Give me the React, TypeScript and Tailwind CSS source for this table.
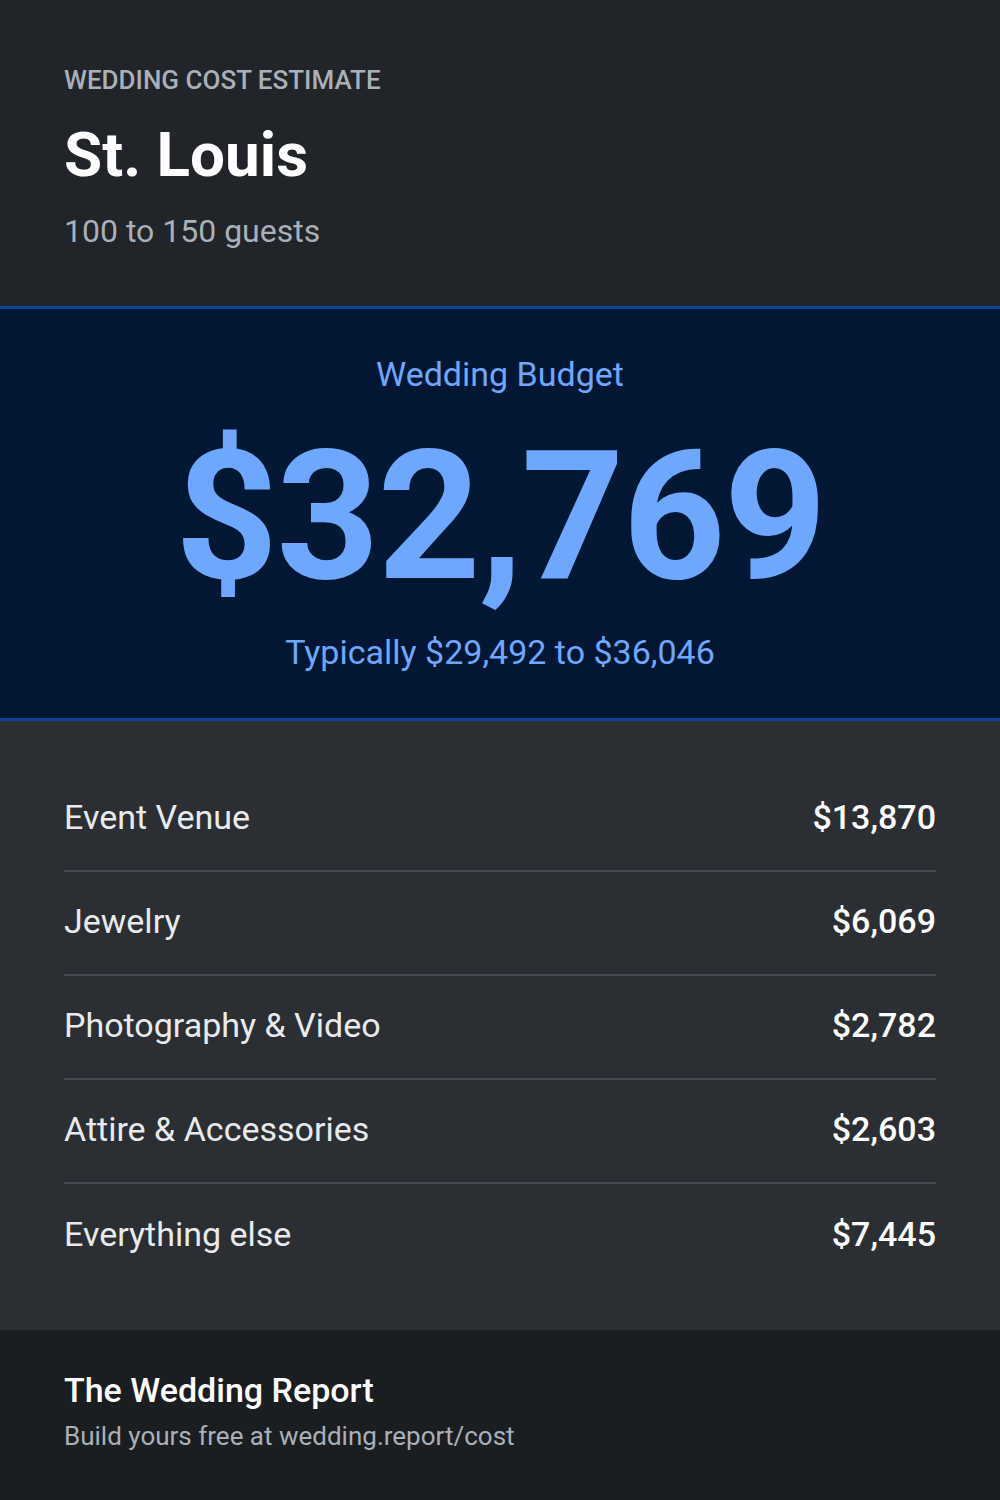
import React from 'react';

const items = [
  { label: 'Event Venue', value: '$13,870' },
  { label: 'Jewelry', value: '$6,069' },
  { label: 'Photography & Video', value: '$2,782' },
  { label: 'Attire & Accessories', value: '$2,603' },
  { label: 'Everything else', value: '$7,445' },
];

const App: React.FC = () => {
  return (
    <div className="w-[1000px] h-[1500px] flex flex-col bg-[#212428] font-['Roboto',sans-serif]">
      {/* Header */}
      <div className="h-[306px] px-16 pt-[62px]">
        <p className="text-[26px] leading-[36px] font-medium text-[#a9b0b9] uppercase">Wedding Cost Estimate</p>
        <h1 className="mt-[21px] text-[62px] leading-[72px] font-bold text-white">St. Louis</h1>
        <p className="mt-[20px] text-[32px] leading-[40px] text-[#a9b0b9]">100 to 150 guests</p>
      </div>

      {/* Budget */}
      <div className="h-[415px] flex flex-col items-center bg-[#021733] border-y-[3px] border-[#0b4599] text-[#6ea8fe]">
        <p className="mt-[45px] text-[34px] leading-[40px]">Wedding Budget</p>
        <p className="mt-[23px] text-[180px] leading-[200px] font-bold tracking-[-2px]">$32,769</p>
        <p className="mt-[15px] text-[34px] leading-[40px]">Typically $29,492 to $36,046</p>
      </div>

      {/* Breakdown */}
      <div className="h-[609px] bg-[#2b2f33] px-16 pt-[47px]">
        {items.map((item, i) => (
          <div
            key={item.label}
            className={`h-[104px] pb-[4px] flex items-center justify-between ${i < items.length - 1 ? 'border-b-2 border-[#464b51]' : ''}`}
          >
            <span className="text-[34px] text-[#e8eaed]">{item.label}</span>
            <span className="text-[34px] font-medium text-white">{item.value}</span>
          </div>
        ))}
      </div>

      {/* Footer */}
      <div className="flex-1 bg-[#1b1e21] px-16 pt-[40px]">
        <p className="text-[34px] leading-[40px] font-medium text-white">The Wedding Report</p>
        <p className="mt-[10px] text-[26px] leading-[32px] text-[#a9b0b9]">Build yours free at wedding.report/cost</p>
      </div>
    </div>
  );
};

export default App;
